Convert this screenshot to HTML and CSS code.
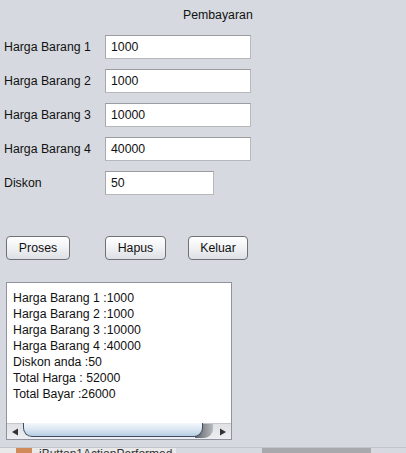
FILE: index.html
```html
<!DOCTYPE html>
<html>
<head>
<meta charset="utf-8">
<link rel="stylesheet" href="styles.css">
</head>
<body>
<div class="frame">
  <div class="title">Pembayaran</div>
  <div class="form">
    <label class="lbl">Harga Barang 1</label><div class="field">1000</div>
    <label class="lbl">Harga Barang 2</label><div class="field">1000</div>
    <label class="lbl">Harga Barang 3</label><div class="field">10000</div>
    <label class="lbl">Harga Barang 4</label><div class="field">40000</div>
    <label class="lbl">Diskon</label><div class="field short">50</div>
  </div>
  <div class="buttons">
    <div class="btn b1">Proses</div>
    <div class="btn b2">Hapus</div>
    <div class="btn b3">Keluar</div>
  </div>
  <div class="area">
    <div class="text">
      <div>Harga Barang 1 :1000</div>
      <div>Harga Barang 2 :1000</div>
      <div>Harga Barang 3 :10000</div>
      <div>Harga Barang 4 :40000</div>
      <div>Diskon anda :50</div>
      <div>Total Harga : 52000</div>
      <div>Total Bayar :26000</div>
    </div>
    <div class="hscroll">
      <div class="arrow left"><svg width="8" height="8" viewBox="0 0 8 8"><path d="M1 4 L7 0.5 L7 7.5 Z" fill="#333"/></svg></div>
      <div class="track"><div class="thumb"></div><div class="shadow"></div></div>
      <div class="arrow right"><svg width="8" height="8" viewBox="0 0 8 8"><path d="M7 4 L1 0.5 L1 7.5 Z" fill="#333"/></svg></div>
    </div>
  </div>
  <div class="strip">
    <div class="seg s1"><span class="ico"></span><span class="cut">jButton1ActionPerformed</span></div>
    <div class="seg s2"></div>
    <div class="seg s3"></div>
  </div>
</div>
</body>
</html>
```
FILE: styles.css
```css
html, body {
  margin: 0;
  padding: 0;
  background: #d6d9df;
  overflow: hidden;
}
.frame {
  width: 406px;
  height: 453px;
  font-family: "Liberation Sans", Arial, sans-serif;
  font-size: 12.3px;
  color: #111;
  display: flex;
  flex-direction: column;
}
.title {
  padding-left: 183px;
  padding-top: 7px;
  height: 17px;
  line-height: 16px;
}
.form {
  margin-top: 11px;
  display: grid;
  grid-template-columns: 101px 146px;
  grid-auto-rows: 24px;
  row-gap: 10px;
  padding-left: 4px;
}
.lbl {
  line-height: 24px;
}
.field {
  box-sizing: border-box;
  background: #fff;
  border: 1px solid #b6b8bc;
  border-top-color: #9a9ca0;
  border-left-color: #a6a8ac;
  line-height: 22px;
  padding-left: 5px;
  height: 24px;
}
.field.short {
  width: 109px;
}
.buttons {
  display: flex;
  margin-top: 41px;
  height: 24px;
}
.btn {
  box-sizing: border-box;
  height: 24px;
  border: 1px solid #6f7175;
  border-radius: 4px;
  background: linear-gradient(#ffffff, #f2f3f5 45%, #dcdfe4);
  text-align: center;
  line-height: 22px;
}
.b1 { margin-left: 6px; width: 64px; }
.b2 { margin-left: 35px; width: 61px; }
.b3 { margin-left: 22px; width: 60px; }
.area {
  box-sizing: border-box;
  margin-top: 22px;
  margin-left: 6px;
  width: 226px;
  height: 160px;
  border: 1px solid #8e939d;
  background: #fff;
  display: flex;
  flex-direction: column;
}
.text {
  flex: 1;
  padding: 7px 0 0 6px;
  line-height: 16px;
}
.hscroll {
  height: 15px;
  display: flex;
  background: linear-gradient(#dfe1e5, #eceef1);
  border-top: 1px solid #c4c7cc;
}
.arrow {
  width: 16px;
  display: flex;
  align-items: center;
  justify-content: center;
}
.track {
  flex: 1;
  position: relative;
}
.thumb {
  position: absolute;
  left: 0;
  top: -1px;
  width: 180px;
  height: 14px;
  box-sizing: border-box;
  border: 1px solid #3d4d62;
  border-top: none;
  border-radius: 0 0 9px 9px;
  background: linear-gradient(#f4f8fc, #d9e6f1 50%, #b7cde0);
  z-index: 1;
}
.shadow {
  position: absolute;
  left: 172px;
  top: 0;
  width: 18px;
  height: 14px;
  border-radius: 0 0 9px 0;
  background: linear-gradient(90deg, #5e6066, #b7babf);
}
.strip {
  margin-top: 7px;
  height: 5px;
  display: flex;
  overflow: hidden;
  border-top: 1px solid #c2c4c8;
}
.seg { height: 5px; }
.s1 {
  width: 176px;
  background: #e9e9ea;
  position: relative;
  overflow: hidden;
}
.ico {
  position: absolute;
  left: 16px;
  top: -3px;
  width: 16px;
  height: 8px;
  background: #d08a5a;
}
.cut {
  position: absolute;
  left: 39px;
  top: 0;
  font-size: 12px;
  color: #333;
  line-height: 12px;
  white-space: nowrap;
}
.s2 { width: 86px; background: #d6d9df; }
.s3 { width: 109px; background: #a7a9ad; }
```
